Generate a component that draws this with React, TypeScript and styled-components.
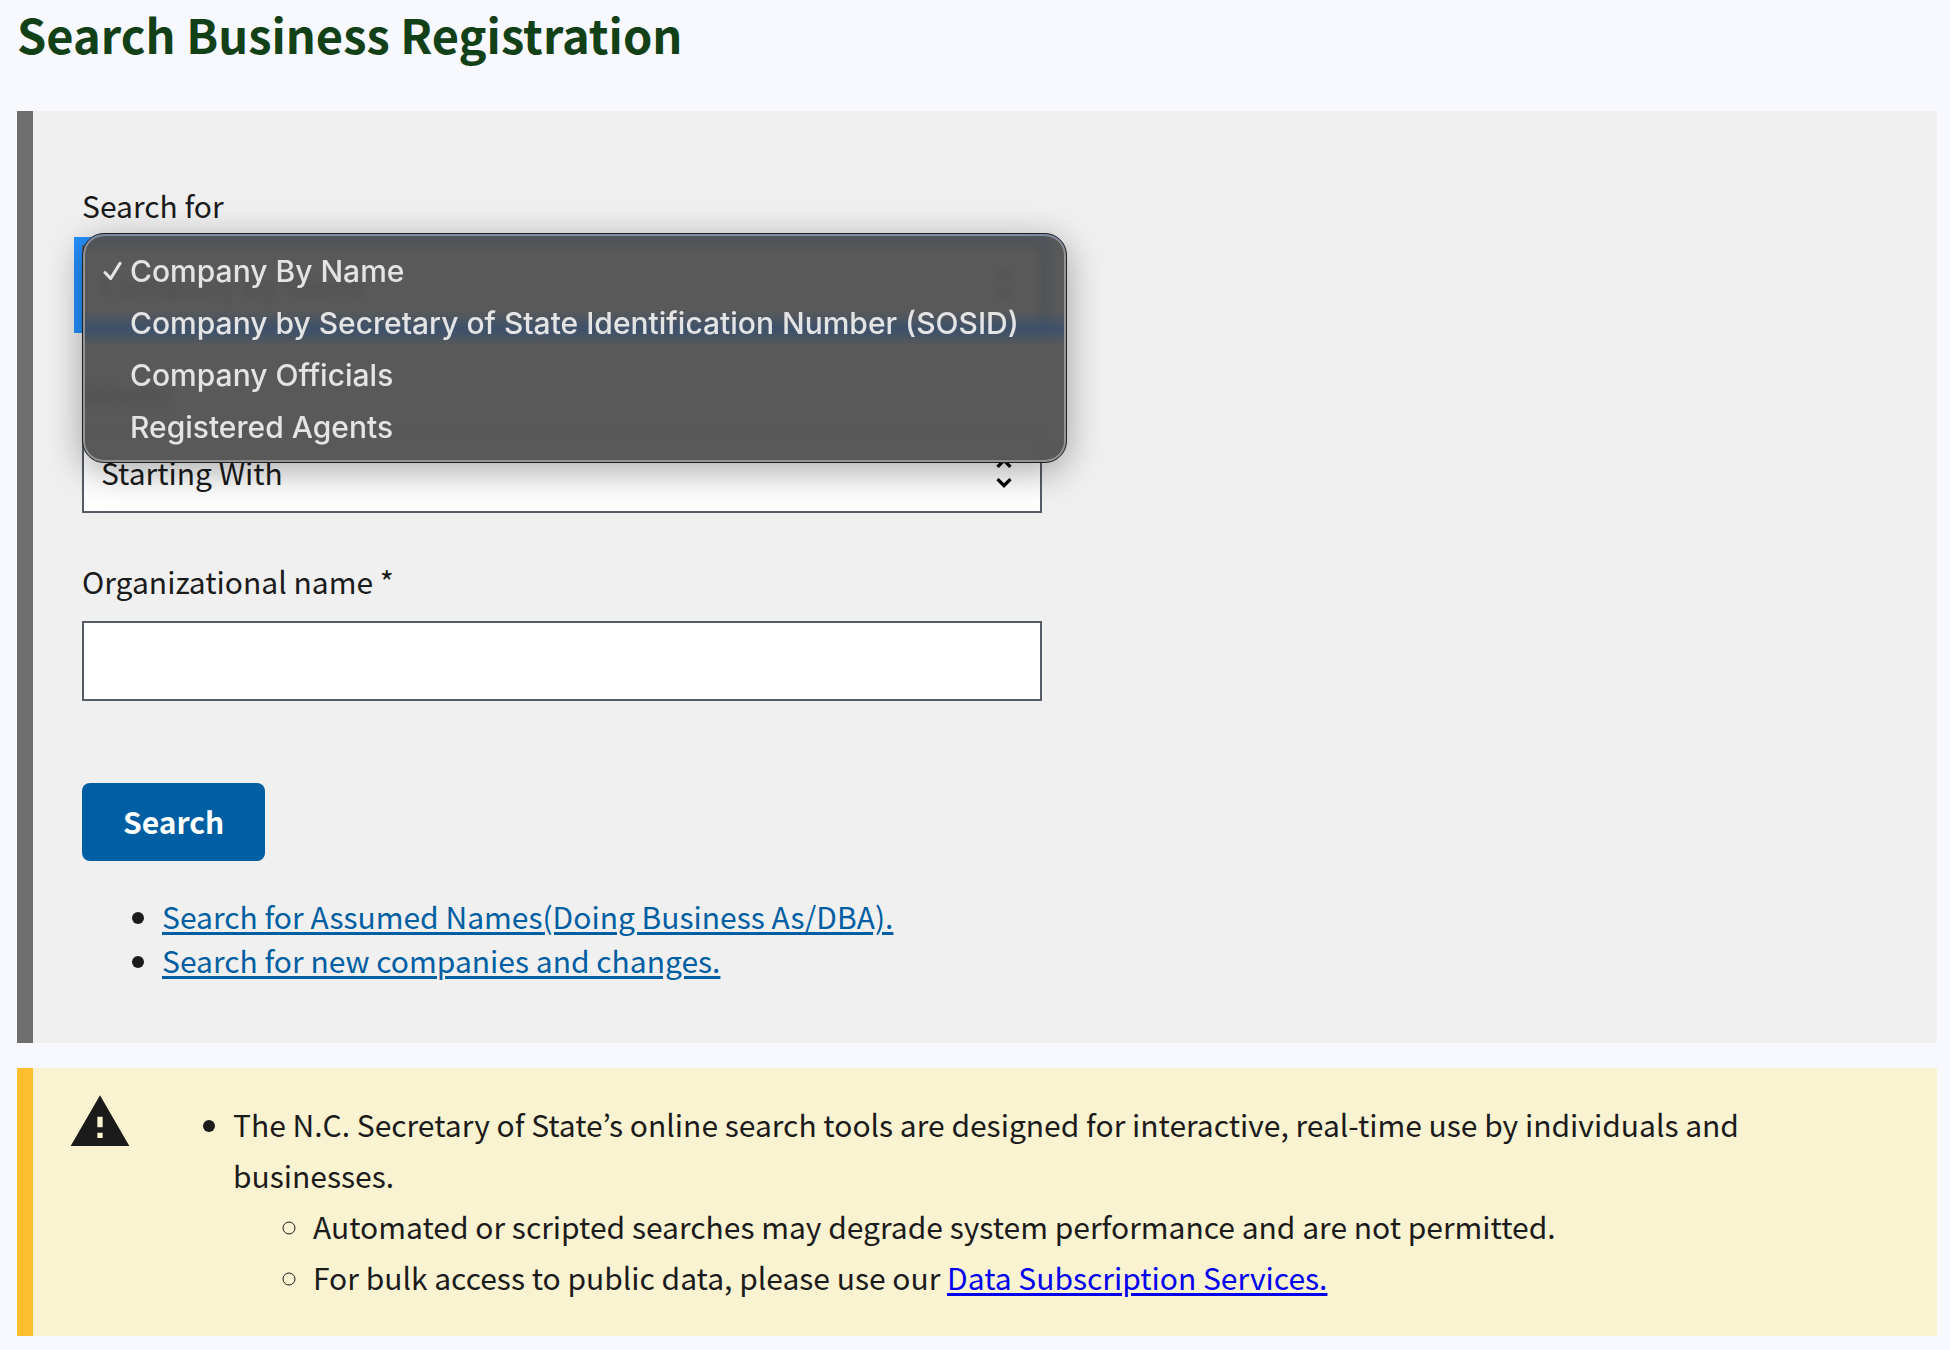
import React, { useState } from "react";
import styled, { createGlobalStyle, css } from "styled-components";

const GlobalStyle = createGlobalStyle`
  *, *::before, *::after { box-sizing: border-box; }
  body {
    margin: 0;
    background: #f8f9ff;
    color: #1b1b1b;
    font-family: "Noto Sans CJK KR", "Noto Sans", sans-serif;
    font-size: 30px;
    line-height: 44px;
  }
`;

const Page = styled.main`
  display: flex;
  flex-direction: column;
  padding: 0 13px 14px 17px;
`;

const Title = styled.h1`
  margin: 0 0 43px;
  color: #124017;
  font-size: 47px;
  line-height: 68px;
  font-weight: 700;
`;

const Panel = styled.section`
  margin-bottom: 25px;
  padding: 72px 49px 61px;
  border-left: 16px solid #6e6e6e;
  background: #f0f0f0;
`;

const Form = styled.form`
  display: flex;
  flex-direction: column;
  align-items: flex-start;
  gap: 46px;
`;

const Field = styled.div`
  display: flex;
  flex-direction: column;
  gap: 18px;
  width: 100%;
  max-width: 960px;
`;

const SelectWrap = styled.div`
  position: relative;
  display: grid;
  align-items: center;

  > select, > svg { grid-area: 1 / 1; }
  > svg {
    justify-self: end;
    margin-right: 18px;
    pointer-events: none;
  }
`;

const control = css`
  width: 100%;
  height: 80px;
  padding: 0 17px 2px;
  border: 2px solid #565c65;
  border-radius: 0;
  background: #fff;
  color: #1b1b1b;
  font: inherit;
`;

const Select = styled.select<{ $active?: boolean }>`
  ${control}
  appearance: none;
  outline: ${(p) => (p.$active ? "8px solid #2491ff" : "none")};
`;

const Input = styled.input`
  ${control}
`;

const Menu = styled.ul`
  position: absolute;
  z-index: 2;
  top: -12px;
  left: 0;
  margin: 0;
  padding: 11px 47px 9px 20px;
  list-style: none;
  border: 1px solid #1f2022;
  border-radius: 22px;
  background:
    linear-gradient(
      to bottom,
      transparent 76px,
      rgba(56, 80, 112, 0.7) 94px,
      rgba(56, 80, 112, 0.7) 98px,
      transparent 112px
    ),
    rgba(80, 80, 80, 0.95);
  backdrop-filter: blur(5px);
  box-shadow:
    inset 0 2px 0 #7c8ba3,
    inset 0 0 0 2px #949494,
    0 8px 36px rgba(0, 0, 0, 0.34);
  color: #e4e4e4;
  font-family: Inter, "Liberation Sans", sans-serif;
  font-size: 30px;
  font-weight: 500;
  line-height: 52px;
  white-space: nowrap;
`;

const Option = styled.li`
  display: grid;
  grid-template-columns: 27px auto;
  align-items: center;
  cursor: default;
`;

const SearchButton = styled.button`
  margin-top: 36px;
  height: 78px;
  padding: 0 41px 2px;
  border: 0;
  border-radius: 8px;
  background: #005ea2;
  color: #fff;
  font: inherit;
  font-weight: 700;
  cursor: pointer;
`;

const LinkList = styled.ul`
  margin: 33px 0 0;
  padding-left: 80px;
`;

const Link = styled.a<{ $color: string }>`
  color: ${(p) => p.$color};
  text-decoration-line: underline;
  text-decoration-thickness: 3px;
  text-underline-offset: 3px;
`;

const Alert = styled.aside`
  display: flex;
  align-items: flex-start;
  padding: 22px 35px 33px;
  border-left: 16px solid #ffbe2e;
  background: #faf3d1;

  > svg { flex: none; }
`;

const NoticeList = styled.ul`
  margin: 9px 0 0;
  padding-left: 101px;
  line-height: 51px;
`;

const SubList = styled.ul`
  margin: 0;
  padding-left: 80px;
`;

const UnfoldIcon = () => (
  <svg width="40" height="40" viewBox="0 0 24 24" aria-hidden="true">
    <path
      fill="#000"
      d="M12 5.83 15.17 9l1.41-1.41L12 3 7.41 7.59 8.83 9 12 5.83zm0 12.34L8.83 15l-1.41 1.41L12 21l4.59-4.59L15.17 15 12 18.17z"
    />
  </svg>
);

const CheckIcon = () => (
  <svg width="20" height="20" viewBox="0 0 20 20" aria-hidden="true">
    <path
      d="M2 11.5 7.6 17.6 17 2.4"
      fill="none"
      stroke="#e4e4e4"
      strokeWidth="3"
      strokeLinecap="round"
      strokeLinejoin="round"
    />
  </svg>
);

const WarningIcon = () => (
  <svg width="64" height="64" viewBox="0 0 24 24" aria-hidden="true">
    <path fill="#1b1b1b" d="M1 21h22L12 2 1 21zm12-3h-2v-2h2v2zm0-4h-2v-4h2v4z" />
  </svg>
);

const searchTypes = [
  "Company By Name",
  "Company by Secretary of State Identification Number (SOSID)",
  "Company Officials",
  "Registered Agents",
];

export default function App() {
  const [type, setType] = useState(searchTypes[0]);

  return (
    <>
      <GlobalStyle />
      <Page>
        <Title>Search Business Registration</Title>
        <Panel>
          <Form onSubmit={(e) => e.preventDefault()}>
            <Field>
              <label htmlFor="search-for">Search for</label>
              <SelectWrap>
                <Select
                  id="search-for"
                  $active
                  value={type}
                  onChange={(e) => setType(e.target.value)}
                >
                  {searchTypes.map((t) => (
                    <option key={t}>{t}</option>
                  ))}
                </Select>
                <UnfoldIcon />
                <Menu role="listbox" aria-label="Search for">
                  {searchTypes.map((t) => (
                    <Option
                      key={t}
                      role="option"
                      aria-selected={t === type}
                      onClick={() => setType(t)}
                    >
                      {t === type ? <CheckIcon /> : <span />}
                      {t}
                    </Option>
                  ))}
                </Menu>
              </SelectWrap>
            </Field>
            <Field>
              <label htmlFor="words">Words</label>
              <SelectWrap>
                <Select id="words" defaultValue="Starting With">
                  <option>Starting With</option>
                </Select>
                <UnfoldIcon />
              </SelectWrap>
            </Field>
            <Field>
              <label htmlFor="org-name">Organizational name *</label>
              <Input id="org-name" type="text" required />
            </Field>
            <SearchButton type="submit">Search</SearchButton>
          </Form>
          <LinkList>
            <li>
              <Link $color="#005ea2" href="#assumed">
                Search for Assumed Names(Doing Business As/DBA).
              </Link>
            </li>
            <li>
              <Link $color="#005ea2" href="#changes">
                Search for new companies and changes.
              </Link>
            </li>
          </LinkList>
        </Panel>
        <Alert>
          <WarningIcon />
          <NoticeList>
            <li>
              The N.C. Secretary of State’s online search tools are designed for
              interactive, real-time use by individuals and businesses.
              <SubList>
                <li>
                  Automated or scripted searches may degrade system performance
                  and are not permitted.
                </li>
                <li>
                  For bulk access to public data, please use our{" "}
                  <Link $color="#0000ee" href="#data">
                    Data Subscription Services.
                  </Link>
                </li>
              </SubList>
            </li>
          </NoticeList>
        </Alert>
      </Page>
    </>
  );
}
